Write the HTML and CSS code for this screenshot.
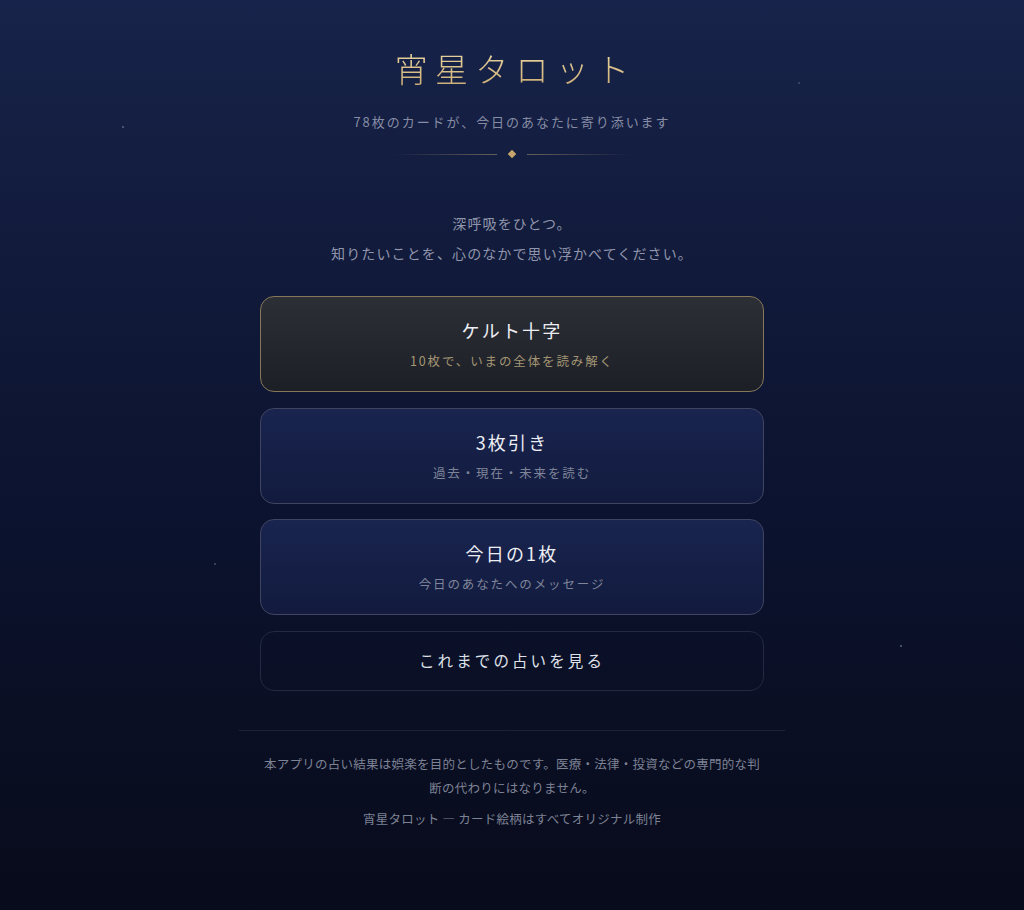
FILE: index.html
```html
<!DOCTYPE html>
<html lang="ja">
<head>
<meta charset="utf-8">
<title>宵星タロット</title>
<link rel="stylesheet" href="styles.css">
</head>
<body>
<div class="sky">
  <span class="star s1"></span>
  <span class="star s2"></span>
  <span class="star s3"></span>
  <span class="star s4"></span>
  <span class="star s5"></span>
</div>
<main class="app">
  <header class="hero">
    <h1 class="title">宵星タロット</h1>
    <p class="tagline">78枚のカードが、今日のあなたに寄り添います</p>
    <div class="ornament"><span class="line left"></span><span class="diamond"></span><span class="line right"></span></div>
  </header>

  <p class="intro">深呼吸をひとつ。<br>知りたいことを、心のなかで思い浮かべてください。</p>

  <nav class="menu">
    <button class="spread featured">
      <span class="spread-name">ケルト十字</span>
      <span class="spread-desc">10枚で、いまの全体を読み解く</span>
    </button>
    <button class="spread">
      <span class="spread-name">3枚引き</span>
      <span class="spread-desc">過去・現在・未来を読む</span>
    </button>
    <button class="spread">
      <span class="spread-name">今日の1枚</span>
      <span class="spread-desc">今日のあなたへのメッセージ</span>
    </button>
    <button class="history">これまでの占いを見る</button>
  </nav>

  <footer class="footer">
    <p class="disclaimer">本アプリの占い結果は娯楽を目的としたものです。医療・法律・投資などの専門的な判断の代わりにはなりません。</p>
    <p class="credit">宵星タロット — カード絵柄はすべてオリジナル制作</p>
  </footer>
</main>
</body>
</html>
```

FILE: styles.css
```css
* { box-sizing: border-box; }

html, body {
  margin: 0;
  padding: 0;
}

body {
  min-height: 910px;
  font-family: "Noto Sans CJK JP", "Noto Sans", sans-serif;
  background: linear-gradient(180deg, #17234a 0%, #111a3a 30%, #0c1330 55%, #0a0f24 78%, #080b1b 100%);
  color: #dcdde6;
  position: relative;
}

.sky {
  position: absolute;
  inset: 0;
  pointer-events: none;
}

.star {
  position: absolute;
  width: 2px;
  height: 2px;
  border-radius: 50%;
  background: #6f7899;
  opacity: 0.8;
}
.s1 { left: 122px; top: 126px; }
.s2 { left: 798px; top: 82px; opacity: 0.5; }
.s3 { left: 214px; top: 563px; opacity: 0.6; }
.s4 { left: 900px; top: 645px; }
.s5 { left: 644px; top: 344px; opacity: 0.5; }

.app {
  position: relative;
  width: 546px;
  margin: 0 auto;
  padding-top: 46px;
  display: flex;
  flex-direction: column;
  align-items: center;
}

.hero {
  display: flex;
  flex-direction: column;
  align-items: center;
}

.title {
  margin: 0;
  font-size: 33px;
  line-height: 44px;
  font-weight: 300;
  letter-spacing: 0.22em;
  padding-left: 0.22em;
  color: #d9c28e;
  background: linear-gradient(180deg, #eedaa6 0%, #c9ab72 100%);
  -webkit-background-clip: text;
  background-clip: text;
  -webkit-text-fill-color: transparent;
}

.tagline {
  margin: 22px 0 0;
  font-size: 13px;
  line-height: 20px;
  letter-spacing: 0.15em;
  color: #868ca3;
}

.ornament {
  margin-top: 18px;
  height: 8px;
  display: flex;
  align-items: center;
  gap: 12px;
}

.line {
  width: 103px;
  height: 1px;
}
.line.left { background: linear-gradient(90deg, rgba(170,150,110,0), rgba(170,150,110,0.55)); }
.line.right { background: linear-gradient(90deg, rgba(170,150,110,0.55), rgba(170,150,110,0)); }

.diamond {
  width: 6px;
  height: 6px;
  background: #c6a56c;
  transform: rotate(45deg);
}

.intro {
  margin: 50px 0 0;
  text-align: center;
  font-size: 14px;
  line-height: 30px;
  letter-spacing: 0.08em;
  color: #9095ab;
}

.menu {
  margin-top: 28px;
  width: 504px;
  display: flex;
  flex-direction: column;
  gap: 15.5px;
}

.spread, .history {
  font-family: inherit;
  width: 100%;
  border-radius: 14px;
  cursor: pointer;
  text-align: center;
}

.spread {
  display: flex;
  flex-direction: column;
  align-items: center;
  gap: 8px;
  padding: 20px 16px 20px;
  border: 1px solid #3f4560;
  background: linear-gradient(180deg, #19244f 0%, #121b3e 100%);
}

.spread.featured {
  border-color: #85775a;
  background: linear-gradient(180deg, #2d2f37 0%, #1d1f27 100%);
}

.spread-name {
  font-size: 18px;
  line-height: 26px;
  letter-spacing: 0.12em;
  color: #eceef3;
}

.spread-desc {
  font-size: 12.5px;
  line-height: 20px;
  letter-spacing: 0.15em;
  color: #7f8499;
}

.featured .spread-desc {
  color: #a39673;
}

.history {
  padding: 17.5px 16px;
  font-size: 15.5px;
  line-height: 23px;
  letter-spacing: 0.2em;
  color: #dfe0e8;
  background: transparent;
  border: 1px solid #242a42;
}

.footer {
  margin-top: 39px;
  width: 546px;
  border-top: 1px solid #1b2139;
  padding: 21px 21px 60px;
  text-align: center;
  color: #7d8295;
}

.disclaimer {
  margin: 0;
  font-size: 12.5px;
  line-height: 24px;
  letter-spacing: 0.02em;
}

.credit {
  margin: 7px 0 0;
  font-size: 12.5px;
  line-height: 24px;
  letter-spacing: 0.02em;
}
```
